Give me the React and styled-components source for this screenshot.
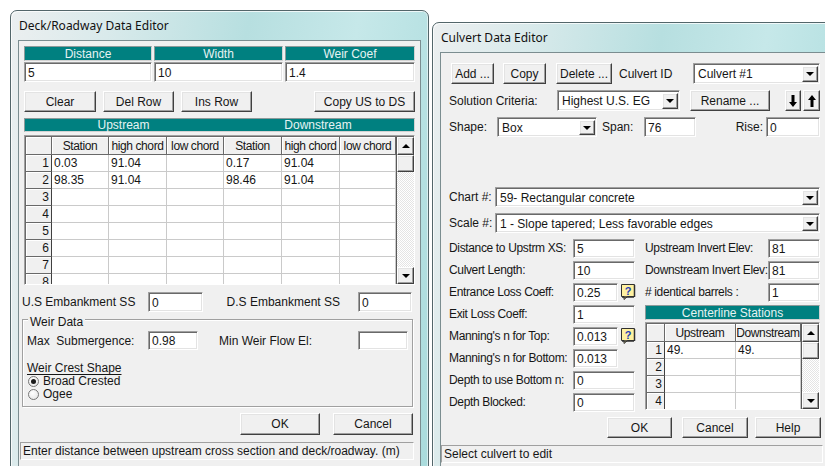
import { Fragment } from "react"
import styled, { createGlobalStyle, css } from "styled-components"

const GlobalStyle = createGlobalStyle`
  html, body {
    margin: 0;
    padding: 0;
    background: #fff;
  }
  body {
    font-family: "Liberation Sans", Arial, sans-serif;
    font-size: 12px;
    color: #161616;
  }
  * {
    box-sizing: border-box;
  }
`

// classic win32 bevels
const raised = css`
  border: 1px solid;
  border-color: #fff #404040 #404040 #fff;
  box-shadow: inset -1px -1px 0 #a0a0a0, inset 1px 1px 0 #e3e3e3;
  background: #f0f0f0;
`

const sunken = css`
  border: 1px solid;
  border-color: #a0a0a0 #fff #fff #a0a0a0;
  box-shadow: inset 1px 1px 0 #696969, inset -1px -1px 0 #e3e3e3;
  background: #fff;
`

const Desktop = styled.div`
  width: 825px;
  height: 466px;
  overflow: hidden;
  display: flex;
  align-items: flex-start;
`

const Window = styled.div`
  flex: none;
  width: ${p => p.$width}px;
  margin-top: ${p => p.$top}px;
  margin-left: ${p => p.$left}px;
  padding: 0 7px 8px;
  border: 1px solid #53666a;
  border-radius: 7px 7px 0 0;
  background: linear-gradient(
    100deg,
    #eceff0 0%,
    #d9eaeb 20%,
    #b7dfe0 48%,
    #c6e8e9 70%,
    #a9dbdc 100%
  );
  box-shadow: inset 1px 1px 0 rgba(255, 255, 255, 0.75),
    inset -1px 0 0 rgba(255, 255, 255, 0.5);
`

const TitleBar = styled.div`
  height: 29px;
  display: flex;
  align-items: center;
  padding: 1px 0 1px 1px;
  font-family: "Noto Sans", "Open Sans", sans-serif;
  font-size: 12px;
  color: #111;
`

const Client = styled.div`
  height: ${p => p.$height}px;
  background: #f0f0f0;
  border: 1px solid #7b8d90;
  display: flex;
  flex-direction: column;
  padding: ${p => p.$pad};
  overflow: hidden;
`

const Row = styled.div`
  display: flex;
  align-items: center;
  flex: none;
  height: ${p => p.$h || 21}px;
  margin-top: ${p => p.$mt || 0}px;
  margin-left: ${p => p.$ml || 0}px;
  margin-right: ${p => p.$mr || 0}px;
  justify-content: ${p => p.$justify || "flex-start"};
`

const Label = styled.span`
  flex: none;
  width: ${p => (p.$w ? `${p.$w}px` : "auto")};
  margin-left: ${p => p.$gap || 0}px;
  letter-spacing: ${p => (p.$tight ? "-0.35px" : "normal")};
  white-space: nowrap;
`

const FillLabel = styled.span`
  flex: 1;
  min-width: 0;
  text-align: ${p => p.$align || "left"};
  padding: ${p => p.$pad || 0};
  letter-spacing: ${p => (p.$tight ? "-0.35px" : "normal")};
  white-space: nowrap;
`

const Button = styled.button`
  ${raised};
  flex: none;
  width: ${p => p.$w}px;
  height: ${p => p.$h || 21}px;
  margin-left: ${p => p.$gap || 0}px;
  padding: 0;
  font: inherit;
  color: inherit;
  display: flex;
  align-items: center;
  justify-content: center;
`

const Field = styled.div`
  ${sunken};
  flex: none;
  width: ${p => (p.$w ? `${p.$w}px` : "auto")};
  height: ${p => p.$h || 20}px;
  margin-left: ${p => p.$gap || 0}px;
  display: flex;
  align-items: center;
  padding: 1px 0 0 3px;
  white-space: nowrap;
  overflow: hidden;
`

const ComboBox = styled.div`
  ${sunken};
  flex: ${p => (p.$w ? "none" : "1")};
  width: ${p => (p.$w ? `${p.$w}px` : "auto")};
  height: ${p => p.$h || 21}px;
  margin-left: ${p => p.$gap || 0}px;
  display: flex;
  padding: 2px 1px 1px 2px;
`

const ComboValue = styled.span`
  flex: 1;
  display: flex;
  align-items: center;
  padding-left: 2px;
  white-space: nowrap;
  overflow: hidden;
`

const DropButton = styled.span`
  ${raised};
  flex: none;
  width: 16px;
  display: flex;
  align-items: center;
  justify-content: center;
`

const Caret = styled.span`
  width: 0;
  height: 0;
  border-left: 4px solid transparent;
  border-right: 4px solid transparent;
  ${p =>
    p.$up
      ? "border-bottom: 4px solid #000;"
      : "border-top: 4px solid #000;"}
`

const TealBar = styled.div`
  flex: none;
  display: flex;
  align-items: center;
  height: ${p => p.$h || 15}px;
  margin-top: ${p => p.$mt || 0}px;
  margin-left: ${p => p.$ml || 0}px;
  background: #008080;
  color: #e6f3f3;
  border: 1px solid;
  border-color: #8c9a9a #d2d2d2 #d2d2d2 #8c9a9a;
`

const TealCaption = styled.span`
  flex: ${p => (p.$w ? `0 0 ${p.$w}px` : "1")};
  text-align: center;
  white-space: nowrap;
`

/* top strip of the deck editor: three titled entry boxes */
const EntryGrid = styled.div`
  display: grid;
  grid-template-columns: 128px 129px 1fr;
  grid-template-rows: 15px 20px;
  column-gap: 2px;
  row-gap: 1px;
  margin-left: 2px;
  flex: none;
`

const EntryHead = styled.div`
  background: #008080;
  color: #e6f3f3;
  display: flex;
  align-items: center;
  justify-content: center;
  border: 1px solid;
  border-color: #8c9a9a #d2d2d2 #d2d2d2 #8c9a9a;
`

/* spreadsheet grid */
const GridFrame = styled.div`
  ${sunken};
  background: #f0f0f0;
  flex: none;
  display: flex;
  height: ${p => p.$h}px;
  margin-top: ${p => p.$mt || 0}px;
  margin-left: ${p => p.$ml || 0}px;
  padding: 1px 0 0 1px;
  overflow: hidden;
`

const Cells = styled.div`
  flex: 1;
  min-width: 0;
  display: grid;
  grid-template-columns: ${p => p.$cols};
  grid-template-rows: 18px;
  grid-auto-rows: 17px;
  align-content: start;
  overflow: hidden;
`

const HeadCell = styled.div`
  background: #f0f0f0;
  border-right: 1px solid #696969;
  border-bottom: 1px solid #696969;
  box-shadow: inset 1px 1px 0 #fff;
  display: flex;
  align-items: center;
  justify-content: center;
  letter-spacing: -0.4px;
  white-space: nowrap;
  overflow: hidden;
`

const RowHead = styled(HeadCell)`
  justify-content: flex-end;
  padding-right: 2px;
  letter-spacing: normal;
  border-right-color: #404040;
`

const Cell = styled.div`
  background: #fff;
  border-right: 1px solid #cacaca;
  border-bottom: 1px solid #cacaca;
  display: flex;
  align-items: center;
  padding-left: 2px;
  white-space: nowrap;
  overflow: hidden;
`

const ScrollBar = styled.div`
  flex: none;
  width: 18px;
  display: flex;
  flex-direction: column;
  border-left: 1px solid #5a5a5a;
  background: repeating-conic-gradient(#fff 0 25%, #e4e4e4 0 50%) 0 0 / 2px 2px;
`

const ScrollButton = styled.div`
  ${raised};
  flex: none;
  height: ${p => p.$h || 17}px;
  display: flex;
  align-items: center;
  justify-content: center;
`

const ScrollTrack = styled.div`
  flex: 1;
`

const Sheet = ({ cols, heads, rows, height, mt, ml }) => (
  <GridFrame $h={height} $mt={mt} $ml={ml}>
    <Cells $cols={cols}>
      <HeadCell />
      {heads.map((h, i) => (
        <HeadCell key={i}>{h}</HeadCell>
      ))}
      {rows.map((r, i) => (
        <Fragment key={i}>
          <RowHead>{i + 1}</RowHead>
          {r.map((v, j) => (
            <Cell key={j}>{v}</Cell>
          ))}
        </Fragment>
      ))}
    </Cells>
    <ScrollBar>
      <ScrollButton $h={18}>
        <Caret $up />
      </ScrollButton>
      <ScrollButton />
      <ScrollTrack />
      <ScrollButton>
        <Caret />
      </ScrollButton>
    </ScrollBar>
  </GridFrame>
)

const Combo = ({ value, w, h, gap }) => (
  <ComboBox $w={w} $h={h} $gap={gap}>
    <ComboValue>{value}</ComboValue>
    <DropButton>
      <Caret />
    </DropButton>
  </ComboBox>
)

/* deck editor lower section */
const EmbankRow = styled.div`
  display: grid;
  grid-template-columns: 126px 55px 1fr 54px;
  align-items: center;
  height: 20px;
  margin-top: 7px;
  margin-right: 3px;
  flex: none;
`

const GroupBox = styled.div`
  flex: none;
  display: flex;
  flex-direction: column;
  height: 88px;
  margin-top: 7px;
  margin-right: 2px;
  padding: 0 4px;
  border: 1px solid #a0a0a0;
  box-shadow: 1px 1px 0 #fff, inset 1px 1px 0 #fff;
`

const GroupCaption = styled.span`
  align-self: flex-start;
  line-height: 14px;
  margin: -5px 0 0 1px;
  padding: 0 2px;
  background: #f0f0f0;
`

const WeirRow = styled.div`
  display: grid;
  grid-template-columns: 121px 50px 1fr 50px;
  align-items: center;
  height: 19px;
  margin-top: 2px;
`

const Underlined = styled.span`
  align-self: flex-start;
  line-height: 14px;
  margin-top: 11px;
  text-decoration: underline;
  text-underline-offset: 2px;
`

const RadioRow = styled.label`
  display: flex;
  align-items: center;
  height: 13px;
  margin-left: 1px;
  line-height: 13px;
`

const RadioMark = styled.span`
  flex: none;
  width: 11px;
  height: 11px;
  margin-right: 4px;
  border-radius: 50%;
  border: 1px solid #767676;
  background: radial-gradient(circle at 40% 35%, #fff 0, #e2e2e2 100%);
  display: flex;
  align-items: center;
  justify-content: center;
  &::after {
    content: "";
    display: ${p => (p.$on ? "block" : "none")};
    width: 5px;
    height: 5px;
    border-radius: 50%;
    background: #1a1a1a;
  }
`

const StatusBar = styled.div`
  flex: none;
  height: 18px;
  margin-top: 7px;
  margin-left: ${p => p.$ml}px;
  margin-right: ${p => p.$mr}px;
  padding-left: 2px;
  display: flex;
  align-items: center;
  white-space: nowrap;
  overflow: hidden;
  border: 1px solid;
  border-color: #a0a0a0 #fff #fff #a0a0a0;
`

/* culvert editor form */
const FormArea = styled.div`
  flex: none;
  display: grid;
  grid-template-columns: 187px minmax(0, 1fr);
  column-gap: 9px;
  margin-top: 4px;
  margin-right: 1px;
`

const FormColumn = styled.div`
  display: flex;
  flex-direction: column;
  min-width: 0;
`

const FormRow = styled.div`
  display: flex;
  align-items: center;
  height: 22px;
`

const HelpSvg = styled.svg`
  flex: none;
  margin-left: 2px;
`

const HelpIcon = () => (
  <HelpSvg width="16" height="18" viewBox="0 0 16 18">
    <path d="M1.5 1.5h13v12h-7l-3.5 3v-3h-2.5z" fill="#fff1a0" stroke="#303030" />
    <path d="M14.5 2v12M2 14h12" stroke="#303030" strokeWidth="1.5" />
    <text
      x="8"
      y="11.5"
      textAnchor="middle"
      fontSize="11"
      fontWeight="bold"
      fontFamily="Liberation Sans, Arial, sans-serif"
      fill="#1d3fb8"
    >
      ?
    </text>
  </HelpSvg>
)

const ArrowGlyph = ({ up }) => (
  <svg width="8" height="12" viewBox="0 0 8 12">
    <path
      d={up ? "M4 0L8 5H5.5V12H2.5V5H0Z" : "M2.5 0H5.5V7H8L4 12L0 7H2.5Z"}
      fill="#000"
    />
  </svg>
)

const deckRows = [
  ["0.03", "91.04", "", "0.17", "91.04", ""],
  ["98.35", "91.04", "", "98.46", "91.04", ""],
  ...Array.from({ length: 6 }, () => ["", "", "", "", "", ""]),
]

const stationRows = [
  ["49.", "49."],
  ["", ""],
  ["", ""],
  ["", ""],
]

const culvertFields = [
  { label: "Distance to Upstrm XS:", value: "5" },
  { label: "Culvert Length:", value: "10" },
  { label: "Entrance Loss Coeff:", value: "0.25", help: true },
  { label: "Exit Loss Coeff:", value: "1" },
  { label: "Manning's n for Top:", value: "0.013", help: true },
  { label: "Manning's n for Bottom:", value: "0.013", short: true },
  { label: "Depth to use Bottom n:", value: "0" },
  { label: "Depth Blocked:", value: "0" },
]

const invertFields = [
  { label: "Upstream Invert Elev:", value: "81" },
  { label: "Downstream Invert Elev:", value: "81" },
  { label: "# identical barrels :", value: "1" },
]

const DeckEditor = () => (
  <Window $left={10} $top={10} $width={419}>
    <TitleBar>Deck/Roadway Data Editor</TitleBar>
    <Client $height={428} $pad="5px 5px 0 3px">
      <EntryGrid>
        <EntryHead>Distance</EntryHead>
        <EntryHead>Width</EntryHead>
        <EntryHead>Weir Coef</EntryHead>
        <Field>5</Field>
        <Field>10</Field>
        <Field>1.4</Field>
      </EntryGrid>

      <Row $mt={9} $ml={2}>
        <Button $w={72}>Clear</Button>
        <Button $w={71} $gap={7}>Del Row</Button>
        <Button $w={71} $gap={7}>Ins Row</Button>
        <Button $w={101} style={{ marginLeft: "auto" }}>Copy US to DS</Button>
      </Row>

      <TealBar $h={14} $mt={6} $ml={2}>
        <TealCaption $w={197}>Upstream</TealCaption>
        <TealCaption>Downstream</TealCaption>
      </TealBar>

      <Sheet
        cols="26px 57px 58px 57px 58px 58px 1fr"
        heads={["Station", "high chord", "low chord", "Station", "high chord", "low chord"]}
        rows={deckRows}
        height={150}
        mt={3}
        ml={2}
      />

      <EmbankRow>
        <span>U.S Embankment SS</span>
        <Field>0</Field>
        <FillLabel $align="right" $pad="0 18px 0 0">D.S Embankment SS</FillLabel>
        <Field>0</Field>
      </EmbankRow>

      <GroupBox>
        <GroupCaption>Weir Data</GroupCaption>
        <WeirRow>
          <span>Max&nbsp; Submergence:</span>
          <Field $h={19}>0.98</Field>
          <FillLabel $pad="0 0 0 21px">Min Weir Flow El:</FillLabel>
          <Field $h={19} />
        </WeirRow>
        <Underlined>Weir Crest Shape</Underlined>
        <RadioRow>
          <RadioMark $on />
          Broad Crested
        </RadioRow>
        <RadioRow>
          <RadioMark />
          Ogee
        </RadioRow>
      </GroupBox>

      <Row $h={22} $mt={6} $mr={2} $justify="flex-end">
        <Button $w={80} $h={22}>OK</Button>
        <Button $w={80} $h={22} $gap={13}>Cancel</Button>
      </Row>

      <StatusBar $ml={-2} $mr={1}>
        Enter distance between upstream cross section and deck/roadway. (m)
      </StatusBar>
    </Client>
  </Window>
)

const CulvertEditor = () => (
  <Window $left={3} $top={22} $width={402}>
    <TitleBar>Culvert Data Editor</TitleBar>
    <Client $height={420} $pad="10px 4px 0 8px">
      <Row $ml={2}>
        <Button $w={43}>Add ...</Button>
        <Button $w={43} $gap={9}>Copy</Button>
        <Button $w={56} $gap={10}>Delete ...</Button>
        <Label $gap={7}>Culvert ID</Label>
        <ComboBox $w={127} style={{ marginLeft: "auto", marginRight: 1 }}>
          <ComboValue>Culvert #1</ComboValue>
          <DropButton>
            <Caret />
          </DropButton>
        </ComboBox>
      </Row>

      <Row $mt={6}>
        <Label $w={108}>Solution Criteria:</Label>
        <Combo value="Highest U.S. EG" w={123} />
        <Button $w={80} $gap={10}>Rename ...</Button>
        <Button $w={16} $gap={15}>
          <ArrowGlyph />
        </Button>
        <Button $w={17} $gap={2}>
          <ArrowGlyph up />
        </Button>
      </Row>

      <Row $h={20} $mt={6} $mr={1}>
        <Label $w={48}>Shape:</Label>
        <Combo value="Box" w={100} h={20} />
        <Label $w={42} $gap={5}>Span:</Label>
        <Field $w={52}>76</Field>
        <FillLabel $align="right" $pad="0 3px 0 0">Rise:</FillLabel>
        <Field $w={54}>0</Field>
      </Row>

      <Row $h={20} $mt={50} $mr={1}>
        <Label $w={46}>Chart #:</Label>
        <Combo value="59- Rectangular concrete" h={20} />
      </Row>

      <Row $h={20} $mt={6} $mr={1}>
        <Label $w={46}>Scale #:</Label>
        <Combo value="1 - Slope tapered; Less favorable edges" h={20} />
      </Row>

      <FormArea>
        <FormColumn>
          {culvertFields.map(f => (
            <FormRow key={f.label}>
              <Label $w={124} $tight>{f.label}</Label>
              <Field $w={f.help || f.short ? 45 : 62} $h={19}>
                {f.value}
              </Field>
              {f.help && <HelpIcon />}
            </FormRow>
          ))}
        </FormColumn>

        <FormColumn>
          {invertFields.map(f => (
            <FormRow key={f.label}>
              <FillLabel $tight>{f.label}</FillLabel>
              <Field $w={52} $h={19}>
                {f.value}
              </Field>
            </FormRow>
          ))}
          <TealBar $mt={2}>
            <TealCaption>Centerline Stations</TealCaption>
          </TealBar>
          <Sheet
            cols="18px 71px 1fr"
            heads={["Upstream", "Downstream"]}
            rows={stationRows}
            height={88}
            mt={2}
          />
        </FormColumn>
      </FormArea>

      <Row $mt={4} $justify="flex-end">
        <Button $w={65}>OK</Button>
        <Button $w={66} $gap={10}>Cancel</Button>
        <Button $w={66} $gap={7}>Help</Button>
      </Row>

      <StatusBar $ml={-8} $mr={-2}>Select culvert to edit</StatusBar>
    </Client>
  </Window>
)

const App = () => (
  <>
    <GlobalStyle />
    <Desktop>
      <DeckEditor />
      <CulvertEditor />
    </Desktop>
  </>
)

export default App
